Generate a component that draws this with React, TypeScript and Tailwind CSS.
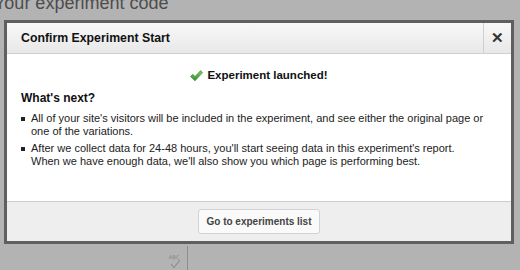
import React from 'react';

function CheckIcon() {
  return (
    <svg width="13" height="12" viewBox="0 0 13 12" className="shrink-0">
      <defs>
        <linearGradient id="chk" x1="0" y1="0" x2="0" y2="1">
          <stop offset="0" stopColor="#7fd36a" />
          <stop offset="1" stopColor="#2f8f2a" />
        </linearGradient>
      </defs>
      <path d="M0.5 6.5 L2.8 4.3 L5 6.6 L10.6 0.6 L12.6 2.6 L5 10.8 Z" fill="url(#chk)" stroke="#2b7a25" strokeWidth="0.6" />
    </svg>
  );
}

function SpellIcon() {
  return (
    <svg width="14" height="14" viewBox="0 0 14 14" className="absolute left-[168px] top-[255px]">
      <path d="M1 4 L2.5 0.5 L4 4 M1.6 2.8 H3.4 M5 0.5 V4 H6.4 Q7.4 4 7.4 3 Q7.4 2.2 6.2 2.2 H5 M6.2 2.2 Q7.2 2.2 7.2 1.3 Q7.2 0.5 6.2 0.5 H5 M11 1 Q10.4 0.5 9.8 0.5 Q8.6 0.5 8.6 2.2 Q8.6 4 9.8 4 Q10.4 4 11 3.4" fill="none" stroke="#8a8a8a" strokeWidth="0.6" />
      <path d="M3 9 L6 12.5 L12 5" fill="none" stroke="#8a8a8a" strokeWidth="1.1" />
    </svg>
  );
}

export default function App() {
  return (
    <div className="relative w-[520px] h-[270px] overflow-hidden bg-[#b3b3b3] font-['Liberation_Sans',Arial,sans-serif]">
      {/* page behind the overlay */}
      <div className="-mt-[7px] -ml-[6px] text-[18px] leading-[20px] text-[#4d4d4d]">Your experiment code</div>
      <div className="absolute left-[187px] top-[246px] h-[30px] w-px bg-[#8f8f8f]" />
      <SpellIcon />

      {/* dialog */}
      <div className="absolute left-[4px] top-[20px] w-[510px] border-[3px] border-[#5f5f5f] bg-white">
        <div className="flex h-[31px] items-stretch border-b border-[#cfcfcf] bg-gradient-to-b from-[#f8f8f8] to-[#e8e8e8]">
          <div className="flex flex-1 items-center pl-[14px] text-[12.3px] font-bold text-[#111]">Confirm Experiment Start</div>
          <div className="flex w-[28px] items-center justify-center border-l border-[#cfcfcf] text-[15px] font-bold text-[#333]">✕</div>
        </div>

        <div className="h-[147px] px-[14px] pt-[13px] text-[#222]">
          <div className="flex items-center justify-center gap-[4px] text-[11.5px] font-bold text-[#111]">
            <CheckIcon />
            <span>Experiment launched!</span>
          </div>
          <div className="mt-[5px] text-[12px] font-bold text-[#111]">What's next?</div>
          <ul className="mt-[5px] flex flex-col gap-[4px] text-[11px] leading-[13px]">
            <li className="flex gap-[6px]">
              <span className="mt-[5px] h-[4px] w-[4px] shrink-0 bg-[#222]" />
              <span>All of your site's visitors will be included in the experiment, and see either the original page or one of the variations.</span>
            </li>
            <li className="flex gap-[6px]">
              <span className="mt-[5px] h-[4px] w-[4px] shrink-0 bg-[#222]" />
              <span>
                After we collect data for 24-48 hours, you'll start seeing data in this experiment's report.
                <br />
                When we have enough data, we'll also show you which page is performing best.
              </span>
            </li>
          </ul>
        </div>

        <div className="flex h-[40px] items-center justify-center border-t border-[#cccccc] bg-[#eeeeee]">
          <button className="h-[25px] rounded-[3px] border border-[#d2d2d2] bg-[#fafafa] px-[7px] text-[10px] font-bold text-[#444]">
            Go to experiments list
          </button>
        </div>
      </div>
    </div>
  );
}
